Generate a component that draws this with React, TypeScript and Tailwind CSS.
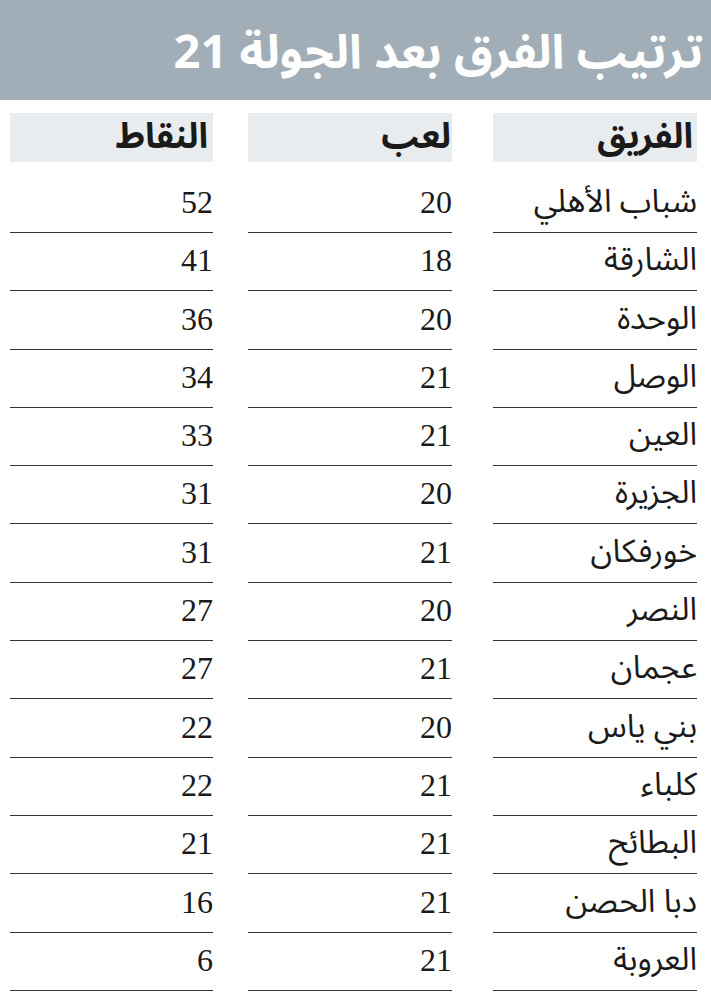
import React from 'react';

interface TeamRow {
  team: string;
  played: number;
  points: number;
}

const rows: TeamRow[] = [
  { team: 'شباب الأهلي', played: 20, points: 52 },
  { team: 'الشارقة', played: 18, points: 41 },
  { team: 'الوحدة', played: 20, points: 36 },
  { team: 'الوصل', played: 21, points: 34 },
  { team: 'العين', played: 21, points: 33 },
  { team: 'الجزيرة', played: 20, points: 31 },
  { team: 'خورفكان', played: 21, points: 31 },
  { team: 'النصر', played: 20, points: 27 },
  { team: 'عجمان', played: 21, points: 27 },
  { team: 'بني ياس', played: 20, points: 22 },
  { team: 'كلباء', played: 21, points: 22 },
  { team: 'البطائح', played: 21, points: 21 },
  { team: 'دبا الحصن', played: 21, points: 16 },
  { team: 'العروبة', played: 21, points: 6 },
];

const arabicFont = "[font-family:'Noto_Sans_Arabic','Noto_Naskh_Arabic','DejaVu_Sans',sans-serif]";
const serifFont = "[font-family:'Liberation_Serif',serif]";

const App: React.FC = () => {
  return (
    <div dir="rtl" className="w-[711px] bg-white">
      {/* title bar */}
      <div className="h-[100px] bg-[#a1adb7] flex items-center pr-[8px] pt-[6px]">
        <h1 className={`${arabicFont} text-[47px] font-bold text-white leading-none`}>
          ترتيب الفرق بعد الجولة 21
        </h1>
      </div>

      <div className="pr-[14px] pl-[10px] pt-[13px]">
        {/* column heads */}
        <div className="flex h-[49px]">
          <div className="w-[204px] bg-[#e8ecef] flex items-center pr-[4px]">
            <span className={`${arabicFont} text-[35px] font-bold text-[#1a1a1a] leading-none`}>الفريق</span>
          </div>
          <div className="w-[204px] mr-[41px] bg-[#e8ecef] flex items-center pr-[1px]">
            <span className={`${arabicFont} text-[35px] font-bold text-[#1a1a1a] leading-none`}>لعب</span>
          </div>
          <div className="w-[203px] mr-[35px] bg-[#e8ecef] flex items-center pr-[5px]">
            <span className={`${arabicFont} text-[35px] font-bold text-[#1a1a1a] leading-none`}>النقاط</span>
          </div>
        </div>

        <div className="mt-[12.7px]">
          {rows.map((r) => (
            <div key={r.team} className="flex h-[58.3px]">
              <div className="w-[204px] border-b border-[#333] flex items-end pb-[14px]">
                <span className={`${arabicFont} text-[32px] text-[#1a1a1a] leading-none`}>{r.team}</span>
              </div>
              <div className="w-[204px] mr-[41px] border-b border-[#333] flex items-end pb-[14px]">
                <span className={`${serifFont} text-[32px] text-[#1a1a1a] leading-none`}>{r.played}</span>
              </div>
              <div className="w-[203px] mr-[35px] border-b border-[#333] flex items-end pb-[14px]">
                <span className={`${serifFont} text-[32px] text-[#1a1a1a] leading-none`}>{r.points}</span>
              </div>
            </div>
          ))}
        </div>
      </div>
    </div>
  );
};

export default App;
